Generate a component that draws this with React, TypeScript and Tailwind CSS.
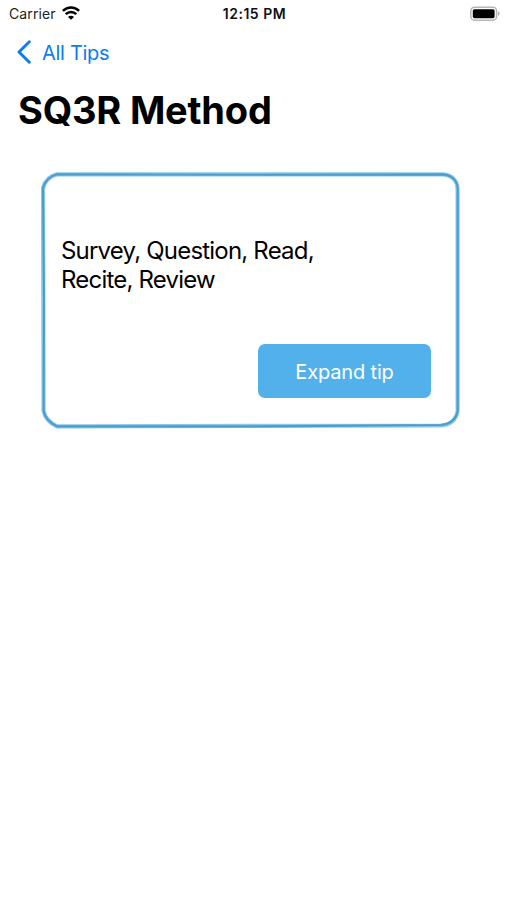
import React from "react";

interface CardProps {
  text: string;
  buttonLabel: string;
}

function StatusBar() {
  return (
    <div className="grid h-7 grid-cols-3 items-center pr-[7px] pl-[9px]">
      <div className="flex items-center gap-[6px]">
        <span className="text-[14px] leading-7 tracking-[0.1px] text-[#222]">Carrier</span>
        <svg className="-mt-[2px]" width="18" height="14" viewBox="0 0 18 14" fill="none" stroke="#000">
          <path d="M0.9 4.9C5.4 0.3 12.6 0.3 17.1 4.9" strokeWidth="2.5" />
          <path d="M3.7 8.1C6.7 5.2 11.3 5.2 14.3 8.1" strokeWidth="2.4" />
          <path d="M9 13.8L6 10.9C7.7 9.2 10.3 9.2 12 10.9Z" fill="#000" stroke="none" />
        </svg>
      </div>
      <span className="text-center text-[14px] leading-7 font-semibold tracking-[0.5px] whitespace-nowrap text-[#111]">
        12:15 PM
      </span>
      <div className="flex justify-end">
        <svg className="-mt-[2px]" width="31" height="15" viewBox="0 0 31 15">
          <rect x="1.8" y="1.2" width="25.8" height="13" rx="3.8" fill="#fff" stroke="#b5b5b5" strokeWidth="1.5" />
          <rect x="3.8" y="3.2" width="21.8" height="9" rx="1.6" fill="#000" />
          <path d="M29 5.6C31 6.2 31 9.2 29 9.8Z" fill="#aaa" />
        </svg>
      </div>
    </div>
  );
}

function BackLink({ label }: { label: string }) {
  return (
    <nav className="flex h-12 items-center pl-[17px]">
      <button className="flex items-center gap-[11px] text-[#0a7cf0]">
        <svg width="14" height="24" viewBox="0 0 14 24" fill="none">
          <path
            d="M12.3 1.8L2 12L12.3 22.2"
            stroke="currentColor"
            strokeWidth="2.9"
            strokeLinecap="round"
            strokeLinejoin="round"
          />
        </svg>
        <span className="pt-px text-[20px] leading-6 tracking-[-0.3px]">{label}</span>
      </button>
    </nav>
  );
}

// hand drawn outline, every corner is slightly different
function CardFrame() {
  return (
    <svg className="absolute inset-0" width="420" height="258" viewBox="0 0 420 258" fill="none">
      <path
        d="M16 3.4H402C410 4 416.5 9 416.6 18V240C415 249 409 254 400 254.5L16 255.4C9 252 4 247 2.6 240L2 17C4 10 9 5 16 3.4Z"
        stroke="#8ec8e8"
        strokeWidth="4.2"
      />
      <path
        d="M16 3.2L210 3.8L402 3.4C410 4 416.5 9 416.7 18V240C415 249 409 253 400 254L210 255.4H16C9 252 4 247 2.6 240L3 130L2 17C4 10 9 5 16 3.2Z"
        stroke="#4b9ecb"
        strokeWidth="2.1"
      />
    </svg>
  );
}

function TipCard({ text, buttonLabel }: CardProps) {
  return (
    <section className="relative mt-9 ml-[41px] h-[258px] w-[420px] pt-[65px] pr-[30px] pl-5">
      <CardFrame />
      <p className="w-[280px] text-[24px] leading-[29px] tracking-[-0.8px] text-black">{text}</p>
      <div className="mt-[50px] flex justify-end">
        <button className="h-[54px] w-[173px] rounded-[7px] bg-[#52b1eb] pt-px text-[20px] tracking-[-0.15px] text-white">
          {buttonLabel}
        </button>
      </div>
    </section>
  );
}

function App() {
  return (
    <main className="min-h-screen w-full bg-white font-['Inter','Liberation_Sans',sans-serif]">
      <StatusBar />
      <BackLink label="All Tips" />
      <h1 className="mt-[9px] pl-[18px] text-[38px] leading-[50px] font-bold tracking-[-0.2px] text-black">
        SQ3R Method
      </h1>
      <TipCard text="Survey, Question, Read, Recite, Review" buttonLabel="Expand tip" />
    </main>
  );
}

export default App;
